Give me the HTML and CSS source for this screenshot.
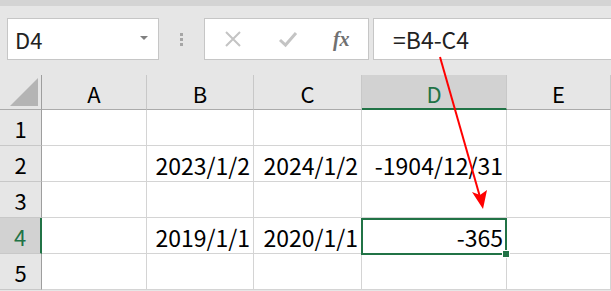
FILE: index.html
```html
<!DOCTYPE html>
<html lang="ja">
<head>
    <meta charset="UTF-8">
    <title>Excel</title>
    <link rel="stylesheet" href="styles.css">
</head>
<body>
    <div class="top-strip"></div>
    <div class="formula-bar">
        <div class="name-box">
            <span>D4</span>
            <svg class="caret" width="8" height="5" viewBox="0 0 8 5"><path d="M0 0 H8 L4 4 Z" fill="#808080"/></svg>
        </div>
        <div class="grip"><i></i><i></i><i></i></div>
        <div class="buttons">
            <svg class="btn" width="20" height="20" viewBox="0 0 20 20"><path d="M3 3 L17 17 M17 3 L3 17" stroke="#c4c4c4" stroke-width="2" fill="none"/></svg>
            <svg class="btn" width="20" height="20" viewBox="0 0 20 20"><path d="M2 11 L7.5 16 L18 4" stroke="#c4c4c4" stroke-width="3" fill="none"/></svg>
            <span class="fx">fx</span>
        </div>
        <div class="formula">=B4-C4</div>
    </div>

    <div class="sheet">
        <div class="grid">
            <div class="corner"><svg width="28" height="28" viewBox="0 0 28 28"><path d="M28 0 V28 H0 Z" fill="#b4b4b4"/></svg></div>
            <div class="col-head">A</div>
            <div class="col-head">B</div>
            <div class="col-head">C</div>
            <div class="col-head active">D</div>
            <div class="col-head">E</div>

            <div class="row-head">1</div>
            <div class="cell"></div><div class="cell"></div><div class="cell"></div><div class="cell"></div><div class="cell"></div>

            <div class="row-head">2</div>
            <div class="cell"></div>
            <div class="cell num">2023/1/2</div>
            <div class="cell num">2024/1/2</div>
            <div class="cell num">-1904/12/31</div>
            <div class="cell"></div>

            <div class="row-head">3</div>
            <div class="cell"></div><div class="cell"></div><div class="cell"></div><div class="cell"></div><div class="cell"></div>

            <div class="row-head active">4</div>
            <div class="cell"></div>
            <div class="cell num">2019/1/1</div>
            <div class="cell num">2020/1/1</div>
            <div class="cell num">-365</div>
            <div class="cell"></div>

            <div class="row-head">5</div>
            <div class="cell"></div><div class="cell"></div><div class="cell"></div><div class="cell"></div><div class="cell"></div>
        </div>
        <div class="selection"><i class="handle"></i></div>
    </div>

    <svg class="arrow" width="611" height="291" viewBox="0 0 611 291">
        <line x1="440" y1="57" x2="482" y2="204" stroke="#ff0000" stroke-width="2"/>
        <path d="M483 209 L472 192 L480 195 L487 190 Z" fill="#ff0000"/>
    </svg>
</body>
</html>
```

FILE: styles.css
```css
body {
    margin: 0;
    background: #e6e6e6;
    font-family: "Noto Sans CJK JP", "Noto Sans", sans-serif;
    color: #000;
    width: 611px;
    height: 291px;
    overflow: hidden;
    position: relative;
}
.top-strip {
    height: 6px;
    background: #d4d4d4;
}
.formula-bar {
    display: flex;
    align-items: center;
    padding: 12px 0 15px 7px;
}
.name-box, .buttons, .formula {
    height: 40px;
    background: #fff;
    border: 1px solid #c6c6c6;
    box-sizing: content-box;
    display: flex;
    align-items: center;
}
.name-box {
    width: 150px;
    justify-content: space-between;
}
.name-box span {
    font-size: 22px;
    margin-left: 7px;
    color: #222;
}
.caret {
    margin-right: 10px;
    margin-top: -2px;
}
.grip {
    width: 45px;
    display: flex;
    flex-direction: column;
    align-items: center;
    gap: 2px;
}
.grip i {
    width: 3px;
    height: 3px;
    background: #a6a6a6;
}
.buttons {
    width: 161px;
    justify-content: space-around;
    padding: 0 1px;
}
.btn {
    display: block;
}
.fx {
    font-family: "Liberation Serif", serif;
    font-style: italic;
    font-weight: bold;
    font-size: 20px;
    color: #707070;
}
.formula {
    flex: 1;
    margin-left: 4px;
    border-right: none;
    font-size: 23px;
    padding-left: 19px;
    color: #222;
}
.sheet {
    position: relative;
}
.grid {
    display: grid;
    grid-template-columns: 42px 105px 107px 108px 145px 1fr;
    grid-template-rows: 35px repeat(5, 36px);
    font-size: 22px;
}
.corner {
    background: #e6e6e6;
    border-right: 1px solid #9e9e9e;
    border-bottom: 1px solid #ababab;
    display: flex;
    align-items: flex-end;
    justify-content: flex-end;
    padding: 0 3px 3px 0;
}
.corner svg {
    display: block;
}
.col-head {
    background: #e6e6e6;
    border-right: 1px solid #c8c8c8;
    border-bottom: 1px solid #ababab;
    display: flex;
    align-items: center;
    justify-content: center;
    padding-top: 2px;
}
.col-head.active {
    background: #d2d2d2;
    color: #217346;
    border-bottom: 2px solid #217346;
}
.row-head {
    background: #e6e6e6;
    border-right: 1px solid #9e9e9e;
    border-bottom: 1px solid #c8c8c8;
    display: flex;
    align-items: center;
    justify-content: center;
}
.row-head.active {
    background: #d2d2d2;
    color: #217346;
    border-right: 2px solid #217346;
}
.cell {
    background: #fff;
    border-right: 1px solid #d4d4d4;
    border-bottom: 1px solid #d4d4d4;
    display: flex;
    align-items: center;
    justify-content: flex-end;
    padding-right: 3px;
    white-space: nowrap;
}
.num {
    font-size: 23px;
    padding-top: 2px;
}
.selection {
    position: absolute;
    left: 361px;
    top: 143px;
    width: 142px;
    height: 33px;
    border: 2px solid #217346;
}
.handle {
    position: absolute;
    right: -5px;
    bottom: -5px;
    width: 6px;
    height: 6px;
    background: #217346;
    border: 1px solid #fff;
}
.arrow {
    position: absolute;
    left: 0;
    top: 0;
    pointer-events: none;
}
```
